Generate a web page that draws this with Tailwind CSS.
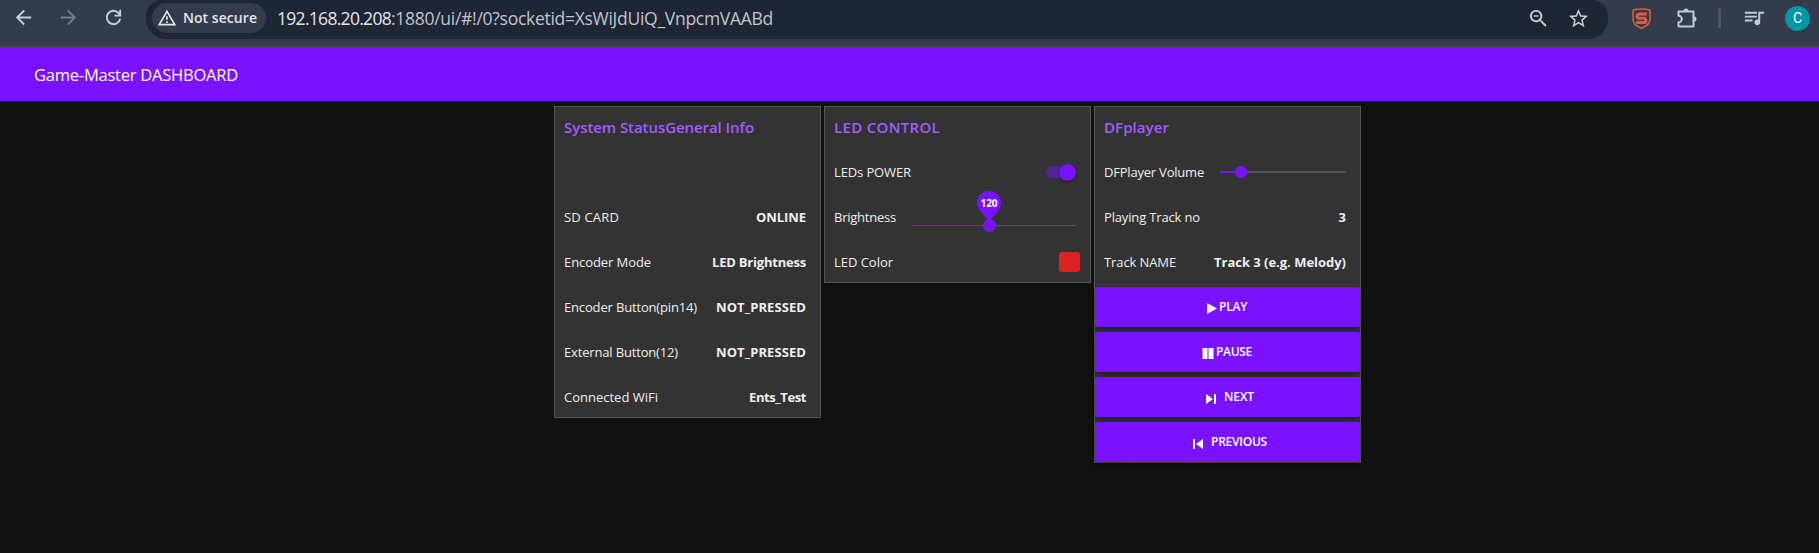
<!DOCTYPE html>
<html lang="en">
<head>
<meta charset="utf-8">
<title>Game-Master DASHBOARD</title>
<script src="https://cdn.jsdelivr.net/npm/@tailwindcss/browser@4"></script>
</head>
<body class="h-[553px] w-[1819px] overflow-hidden bg-[#111111] font-['Open_Sans','Noto_Sans',sans-serif] text-[#eeeeee]">

<!-- Browser toolbar -->
<header class="flex h-12 items-start border-b-2 border-[#474b52] bg-[#343b4b]">
  <div class="flex h-[35px] w-[146px] items-center pl-3 text-[#c5cfe0]">
    <svg class="size-[23px]" viewBox="0 0 24 24" fill="currentColor"><path d="M20 11H7.83l5.59-5.59L12 4l-8 8 8 8 1.41-1.41L7.83 13H20z"/></svg>
    <svg class="ml-[22px] size-[23px] text-[#757c8b]" viewBox="0 0 24 24" fill="currentColor"><path d="M12 4l-1.41 1.41L16.17 11H4v2h12.17l-5.58 5.59L12 20l8-8z"/></svg>
    <svg class="ml-[22px] size-[23px]" viewBox="0 0 24 24" fill="none" stroke="currentColor" stroke-width="2"><path d="M18.9 13.2A7 7 0 1 1 17.2 7.3L19 9.2M19 4v6h-6"/></svg>
  </div>
  <div class="flex h-[39px] w-[1462px] items-start rounded-b-[20px] rounded-t-[16px] bg-[#1e2636] pl-1.5">
    <div class="mt-[3px] flex h-[30px] w-[114px] items-center rounded-full bg-[#343b4b] pl-[5px] text-[#e3e5e9]">
      <svg class="size-5" viewBox="0 0 24 24" fill="currentColor"><path d="M12 5.99L19.53 19H4.47L12 5.99M12 2L1 21h22L12 2zm1 14h-2v2h2v-2zm0-6h-2v4h2v-4z"/></svg>
      <span class="ml-1.5 text-sm font-semibold whitespace-nowrap" data-w="74">Not secure</span>
    </div>
    <div class="ml-[11px] flex h-[37px] items-center text-[17.5px] whitespace-nowrap text-[#e3e5e9]"><span data-w="114">192.168.20.208</span><span class="text-[#c0c4cc]" data-w="382">:1880/ui/#!/0?socketid=XsWiJdUiQ_VnpcmVAABd</span></div>
    <div class="mr-[18px] ml-auto flex h-[36px] items-center gap-[17px] text-[#c9ccd3]">
      <svg class="size-[23px]" viewBox="0 0 24 24" fill="currentColor"><path d="M15.5 14h-.79l-.28-.27A6.471 6.471 0 0 0 16 9.500 6.500 6.500 0 1 0 9.500 16c1.610 0 3.090-.59 4.230-1.570l.27.280v.79l5 4.990L20.490 19l-4.990-5zm-6 0C7.010 14 5 11.990 5 9.500S7.010 5 9.500 5 14 7.010 14 9.500 11.990 14 9.500 14zM7 8.700h5v1.600H7z"/></svg>
      <svg class="size-[23px]" viewBox="0 0 24 24" fill="currentColor"><path d="M22 9.240l-7.190-.62L12 2 9.190 8.630 2 9.240l5.460 4.730L5.820 21 12 17.270 18.180 21l-1.630-7.030L22 9.240zM12 15.400l-3.760 2.270 1-4.280-3.320-2.880 4.380-.38L12 6.100l1.710 4.040 4.380.38-3.320 2.880 1 4.280L12 15.400z"/></svg>
    </div>
  </div>
  <div class="flex h-[36px] flex-1 items-center pl-6 text-[#bfcae0]">
    <svg class="h-[21px] w-[19px]" viewBox="0 0 19 21" fill="none" stroke="#de5a43"><path stroke-width="1.600" d="M9.500 1C6.500 1 3.500 1.400 1 2.300V11c0 4.500 3.500 7.300 8.500 9.200C14.500 18.300 18 15.500 18 11V2.300C15.500 1.400 12.500 1 9.500 1z"/><path stroke-width="3" d="M14.800 6H7.800C4.200 6 4.200 10.300 7.800 10.300h3.400c3.600 0 3.600 4.300 0 4.300H4.200"/></svg>
    <svg class="ml-[25px] size-[22px]" viewBox="0 0 22 22" fill="none" stroke="currentColor" stroke-width="2" stroke-linejoin="round"><path d="M2.500 4.500h15v15h-15v-4.200a3.300 3.300 0 0 0 0-6.600z"/><path fill="currentColor" stroke="none" d="M7.500 4a2.500 2.500 0 0 1 5 0zM18 9.500a2.500 2.500 0 0 1 0 5z"/></svg>
    <div class="ml-[20px] h-5 w-[3px] rounded-full bg-[#4d5566]"></div>
    <svg class="ml-[21px] size-[23px]" viewBox="0 0 24 24" fill="currentColor"><path d="M15.500 5H3v2h12.500V5zm0 4H3v2h12.500V9zM3 15h8v-2H3v2zM17 5v8.180c-.31-.11-.65-.18-1-.18-1.660 0-3 1.340-3 3s1.340 3 3 3 3-1.340 3-3V7h4V5h-6z"/></svg>
    <div class="ml-[20px] flex size-[25px] items-center justify-center rounded-full bg-[#0097a7] font-[Roboto] text-[14px] text-white">C</div>
  </div>
</header>

<!-- Dashboard title bar -->
<div class="flex h-[53px] items-center bg-[#7a12ff] pt-0.5 pl-[34px] text-[16.500px] whitespace-nowrap text-white"><span data-w="204">Game-Master DASHBOARD</span></div>

<main class="ml-[554px] flex items-start gap-[3px] pt-[5px] text-[13px] whitespace-nowrap">

  <section class="flex h-[312px] w-[267px] flex-col gap-[5px] border border-[#555555] bg-[#333333] pr-3.5 pl-[9px]">
    <h2 class="flex h-10 items-center text-[15px] font-semibold text-[#a55cff]"><span data-w="190">System StatusGeneral Info</span></h2>
    <div class="h-10"></div>
    <div class="flex h-10 items-center justify-between pt-0.5"><span data-w="55">SD CARD</span><b data-w="50">ONLINE</b></div>
    <div class="flex h-10 items-center justify-between pt-0.5"><span data-w="87">Encoder Mode</span><b data-w="94">LED Brightness</b></div>
    <div class="flex h-10 items-center justify-between pt-0.5"><span data-w="133">Encoder Button(pin14)</span><b data-w="90">NOT_PRESSED</b></div>
    <div class="flex h-10 items-center justify-between pt-0.5"><span data-w="114">External Button(12)</span><b data-w="90">NOT_PRESSED</b></div>
    <div class="flex h-10 items-center justify-between pt-0.5"><span data-w="94">Connected WiFi</span><b data-w="57">Ents_Test</b></div>
  </section>

  <section class="flex h-[177px] w-[267px] flex-col gap-[5px] border border-[#555555] bg-[#333333] pr-3.5 pl-[9px]">
    <h2 class="flex h-10 items-center text-[15px] font-semibold text-[#a55cff]"><span data-w="106">LED CONTROL</span></h2>
    <div class="flex h-10 items-center justify-between"><span class="pt-0.5" data-w="77">LEDs POWER</span>
      <div class="flex h-3 w-[30px] items-center justify-end rounded-full bg-[#562299]"><div class="size-[17px] shrink-0 rounded-full bg-[#7a12ff] shadow-sm shadow-black/40"></div></div>
    </div>
    <div class="flex h-10 items-center justify-between"><span class="pt-0.5" data-w="62">Brightness</span>
      <div class="relative mt-[16px] h-px w-[164px] bg-[#555555]">
        <div class="h-px w-[77px] bg-[#7a12ff]"></div>
        <div class="absolute -top-[6px] left-[71px] size-[13px] rounded-full bg-[#7a12ff]"></div>
        <svg class="absolute -top-[34px] left-[65px] h-[30px] w-6" viewBox="0 0 24 30" fill="#7a12ff"><path d="M12 0a12 12 0 0 1 9.500 19.300L12 30 2.500 19.300A12 12 0 0 1 12 0z"/></svg>
        <div class="absolute -top-[30px] left-[65px] w-6 text-center text-[10px] leading-[16px] font-bold text-white">120</div>
      </div>
    </div>
    <div class="flex h-10 items-center justify-between"><span class="pt-0.5" data-w="59">LED Color</span><div class="-mr-1 h-5 w-[21px] rounded-[3px] bg-[#e02020]"></div></div>
  </section>

  <section class="flex h-[357px] w-[267px] flex-col gap-[5px] border border-[#555555] bg-[#333333]">
    <h2 class="flex h-10 items-center pl-[9px] text-[15px] font-semibold text-[#a55cff]"><span data-w="65">DFplayer</span></h2>
    <div class="flex h-10 items-center justify-between pr-3.5 pl-[9px]"><span class="pt-0.5" data-w="100">DFPlayer Volume</span>
      <div class="relative h-0.5 w-[126px] bg-[#555555]">
        <div class="h-0.5 w-[21px] bg-[#7a12ff]"></div>
        <div class="absolute -top-[5px] left-[15px] size-3 rounded-full bg-[#7a12ff]"></div>
      </div>
    </div>
    <div class="flex h-10 items-center justify-between pt-0.5 pr-3.5 pl-[9px]"><span data-w="96">Playing Track no</span><b>3</b></div>
    <div class="flex h-10 items-center justify-between pt-0.5 pr-3.5 pl-[9px]"><span data-w="72">Track NAME</span><b data-w="132">Track 3 (e.g. Melody)</b></div>
    <div class="flex flex-col gap-[5px] text-[12px] font-semibold text-white">
      <div class="flex h-10 items-center rounded-[2px] bg-[#7a12ff] pl-[112px] shadow-md shadow-black/30"><svg class="mt-0.5 h-[11px] w-2.5" viewBox="0 0 10 11" fill="currentColor"><path d="M0 0l10 5.500L0 11z"/></svg><span class="ml-[2px]" data-w="28">PLAY</span></div>
      <div class="flex h-10 items-center rounded-[2px] bg-[#7a12ff] pl-[107px] shadow-md shadow-black/30"><svg class="mt-0.5 h-[11px] w-3" viewBox="0 0 12 11" fill="currentColor"><path d="M0.500 0h5v11h-5zM6.500 0h5v11h-5z"/></svg><span class="ml-[2px]" data-w="36">PAUSE</span></div>
      <div class="flex h-10 items-center rounded-[2px] bg-[#7a12ff] pl-[111px] shadow-md shadow-black/30"><svg class="mt-[3px] h-[10px] w-2.5" viewBox="0 0 10 10" fill="currentColor"><path d="M0 0l7 5-7 5zM8 0h2v10H8z"/></svg><span class="ml-2" data-w="30">NEXT</span></div>
      <div class="flex h-10 items-center rounded-[2px] bg-[#7a12ff] pl-[98px] shadow-md shadow-black/30"><svg class="mt-[3px] h-[10px] w-2.5" viewBox="0 0 10 10" fill="currentColor"><path d="M10 0L3 5l7 5zM0 0h2v10H0z"/></svg><span class="ml-2" data-w="56">PREVIOUS</span></div>
    </div>
  </section>
</main>

<script>
// Tracks every label so that it fills its data-w width.
function fitLabels() {
  document.querySelectorAll('[data-w]').forEach(function (el) {
    el.style.letterSpacing = '0px';
    var range = document.createRange();
    range.selectNodeContents(el);
    var gap = (el.dataset.w - range.getBoundingClientRect().width) / el.textContent.length;
    el.style.letterSpacing = gap.toFixed(3) + 'px';
  });
}
fitLabels();
window.addEventListener('load', fitLabels);
document.fonts.ready.then(fitLabels);
setTimeout(fitLabels, 50);
</script>
</body>
</html>
